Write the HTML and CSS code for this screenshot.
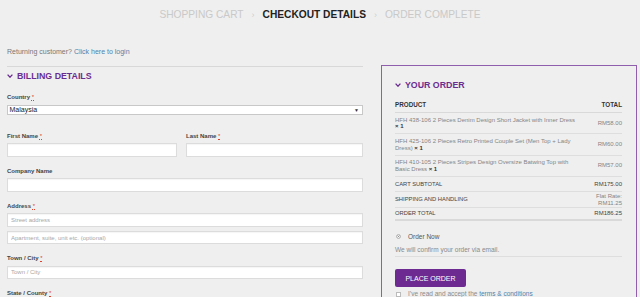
FILE: index.html
```html
<!DOCTYPE html>
<html lang="en">
<head>
  <meta charset="UTF-8" />
  <meta name="viewport" content="width=device-width, initial-scale=1.0"/>
  <title>Checkout Details</title>
  <link rel="stylesheet" href="styles.css">
</head>
<body>

  <header class="steps">
    <span class="step">Shopping Cart</span>
    <span class="sep">›</span>
    <span class="step current">Checkout Details</span>
    <span class="sep">›</span>
    <span class="step">Order Complete</span>
  </header>

  <div class="checkout">
    <div class="billing">
      <p class="returning">Returning customer? <a href="#">Click here to login</a></p>

      <section class="billing-fields">
        <h3 class="section-title">
          <svg width="6" height="4" viewBox="0 0 6 4"><polyline points="0.6,0.6 3,3.2 5.4,0.6" /></svg>
          Billing Details
        </h3>

        <div class="field field-country">
          <label>Country <abbr>*</abbr></label>
          <div class="select">Malaysia<span class="caret">▼</span></div>
        </div>

        <div class="field-row">
          <div class="field">
            <label>First Name <abbr>*</abbr></label>
            <input type="text">
          </div>
          <div class="field">
            <label>Last Name <abbr>*</abbr></label>
            <input type="text">
          </div>
        </div>

        <div class="field">
          <label>Company Name</label>
          <input type="text">
        </div>

        <div class="field">
          <label>Address <abbr>*</abbr></label>
          <input type="text" placeholder="Street address">
          <input type="text" class="second" placeholder="Apartment, suite, unit etc. (optional)">
        </div>

        <div class="field">
          <label>Town / City <abbr>*</abbr></label>
          <input type="text" placeholder="Town / City">
        </div>

        <div class="field">
          <label>State / County <abbr>*</abbr></label>
        </div>
      </section>
    </div>

    <aside class="order">
      <h3 class="section-title">
        <svg width="6" height="4" viewBox="0 0 6 4"><polyline points="0.6,0.6 3,3.2 5.4,0.6" /></svg>
        Your Order
      </h3>

      <table class="order-table">
        <thead>
          <tr><th class="name">Product</th><th class="total">Total</th></tr>
        </thead>
        <tbody>
          <tr>
            <td class="name">HFH 438-106 2 Pieces Denim Design Short Jacket with Inner Dress <strong>× 1</strong></td>
            <td class="total">RM58.00</td>
          </tr>
          <tr>
            <td class="name">HFH 425-106 2 Pieces Retro Printed Couple Set (Men Top + Lady Dress) <strong>× 1</strong></td>
            <td class="total">RM60.00</td>
          </tr>
          <tr>
            <td class="name">HFH 410-105 2 Pieces Stripes Design Oversize Batwing Top with Basic Dress <strong>× 1</strong></td>
            <td class="total">RM57.00</td>
          </tr>
        </tbody>
        <tfoot>
          <tr><th>Cart Subtotal</th><td class="total strong">RM175.00</td></tr>
          <tr class="shipping"><th>Shipping and Handling</th><td class="total">Flat Rate:<br>RM11.25</td></tr>
          <tr class="grand"><th>Order Total</th><td class="total strong">RM186.25</td></tr>
        </tfoot>
      </table>

      <div class="payment">
        <div class="method"><span class="radio"></span><span>Order Now</span></div>
        <p class="method-note">We will confirm your order via email.</p>
      </div>

      <button class="place-order">Place Order</button>

      <div class="terms"><span class="checkbox"></span><span>I’ve read and accept the <a href="#">terms &amp; conditions</a></span></div>
    </aside>
  </div>

</body>
</html>
```

FILE: styles.css
```css
* { margin: 0; padding: 0; box-sizing: border-box; }

body {
  background: #efefef;
  color: #555;
  font-family: 'Liberation Sans', Arial, sans-serif;
  overflow: hidden;
}

a { color: #4f83ad; text-decoration: none; }

/* steps */
.steps {
  display: flex;
  justify-content: center;
  align-items: center;
  gap: 8px;
  padding-top: 9px;
  height: 21px;
  font-size: 10.2px;
  line-height: 12px;
  text-transform: uppercase;
  color: #c9c9c9;
}

.steps .current { color: #222; font-weight: bold; }
.steps .sep { color: #cfcfcf; font-size: 9px; }

/* layout */
.checkout {
  display: flex;
  gap: 18px;
  padding: 25.5px 0 0 7px;
  align-items: flex-start;
}

.billing { width: 356px; }

.returning {
  font-size: 7px;
  line-height: 9px;
  color: #777;
  margin-bottom: 10.5px;
}

.billing-fields { border-top: 1px solid #d8d8d8; }

.section-title {
  display: flex;
  align-items: center;
  gap: 4px;
  font-size: 8.8px;
  line-height: 10px;
  color: #6a2c8f;
  text-transform: uppercase;
}

.section-title svg {
  fill: none;
  stroke: #6a2c8f;
  stroke-width: 1.3;
}

.billing-fields .section-title { margin: 4px 0 12.3px; }

.field { margin-bottom: 10.2px; }
.field-country { margin-bottom: 17px; }

.field label {
  display: block;
  font-size: 6px;
  line-height: 8px;
  font-weight: bold;
  color: #444;
  margin-bottom: 3.5px;
}

abbr {
  color: #e0412a;
  text-decoration: underline dotted;
  font-weight: normal;
}

.field-row {
  display: grid;
  grid-template-columns: 170px 1fr;
  gap: 9px;
}

input[type="text"] {
  display: block;
  width: 100%;
  height: 13.3px;
  border: 1px solid #dcdcdc;
  box-shadow: inset 0 1px 1px rgba(0, 0, 0, 0.04);
  background: #fff;
  padding: 0 3px;
  font-family: inherit;
  font-size: 6px;
  color: #555;
}

input::placeholder { color: #a8a8a8; }

input.second { margin-top: 4.3px; }

.select {
  position: relative;
  height: 10px;
  border: 1px solid #c8c8c8;
  background: #fff;
  padding-left: 1.5px;
  font-size: 7px;
  line-height: 8px;
  color: #222;
}

.select .caret {
  position: absolute;
  right: 3px;
  top: 0;
  font-size: 5px;
  color: #333;
}

/* order panel */
.order {
  width: 256px;
  margin-top: 18.5px;
  height: 300px;
  border: 1px solid #8f5fae;
  padding: 14px 14px 0 13px;
}

.order .section-title { margin-bottom: 6px; }

.order-table {
  width: 100%;
  border-collapse: collapse;
  table-layout: fixed;
  font-size: 6px;
}

.order-table th {
  text-align: left;
  text-transform: uppercase;
  color: #333;
}

.order-table thead th {
  font-size: 6.3px;
  line-height: 7px;
  padding: 4.5px 0;
  border-bottom: 1px solid #d9d9d9;
}

.order-table thead th.name { width: 192px; }

.order-table .total { text-align: right; }

.order-table tbody td {
  color: #858585;
  line-height: 6.8px;
  padding: 3.5px 0 3.2px;
  border-bottom: 1px solid #dedede;
  vertical-align: middle;
}

.order-table tbody td.name { padding-right: 4px; }
.order-table tbody strong { color: #333; white-space: nowrap; }

.order-table tfoot th,
.order-table tfoot td {
  height: 15.5px;
  line-height: 6.7px;
  font-size: 5.8px;
  border-bottom: 1px solid #dedede;
  vertical-align: middle;
  font-weight: normal;
  color: #444;
}

.order-table tfoot td { color: #858585; font-size: 6px; }
.order-table tfoot td.strong { color: #444; }

.order-table tfoot .grand th,
.order-table tfoot .grand td {
  height: 12.5px;
  border-bottom: 2px solid #d9d9d9;
}

.payment {
  margin-top: 12px;
  font-size: 6.5px;
}

.method {
  display: flex;
  align-items: center;
  gap: 7px;
  line-height: 8px;
  color: #555;
}

.radio {
  width: 5px;
  height: 5px;
  border-radius: 50%;
  border: 1px solid #c6c6c6;
  background: #666;
  box-shadow: inset 0 0 0 1px #fff;
  margin-left: 1px;
}

.method-note {
  margin-top: 5.5px;
  line-height: 8px;
  padding-bottom: 1.5px;
  color: #8a8a8a;
  border-bottom: 1px solid #dedede;
}

.place-order {
  margin-top: 12.5px;
  width: 71px;
  height: 17.5px;
  border: none;
  border-radius: 2px;
  background: #6d2a90;
  color: #fff;
  font-family: inherit;
  font-size: 7px;
  text-transform: uppercase;
}

.terms {
  display: flex;
  align-items: center;
  gap: 7px;
  margin-top: 3.5px;
  font-size: 6.5px;
  line-height: 8px;
  color: #8a8a8a;
}

.checkbox {
  width: 5px;
  height: 5px;
  border: 1px solid #bbb;
  background: #fff;
  margin-left: 1px;
}
```
